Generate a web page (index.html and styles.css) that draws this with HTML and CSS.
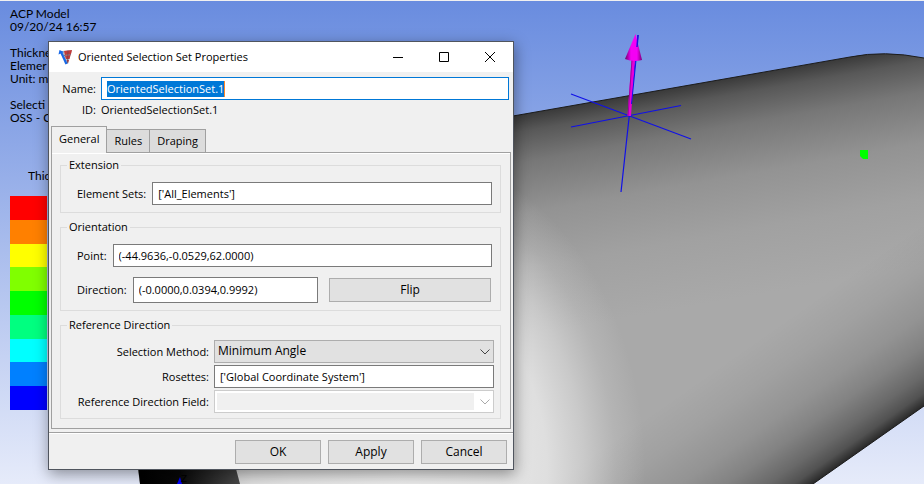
FILE: index.html
```html
<!DOCTYPE html>
<html lang="en">
<head>
<meta charset="utf-8">
<title>Oriented Selection Set Properties</title>
<link rel="stylesheet" href="styles.css">
</head>
<body>
<main class="viewport">
  <svg class="scene" viewBox="0 0 924 484" preserveAspectRatio="xMinYMin slice" aria-hidden="true">
    <defs>
      <linearGradient id="shade" gradientUnits="userSpaceOnUse" x1="600" y1="100" x2="638" y2="316">
        <stop offset="0" stop-color="#383838"/>
        <stop offset=".08" stop-color="#585858"/>
        <stop offset=".22" stop-color="#777"/>
        <stop offset=".45" stop-color="#939393"/>
        <stop offset=".7" stop-color="#a1a1a1"/>
        <stop offset="1" stop-color="#a9a9a9"/>
      </linearGradient>
      <linearGradient id="under" gradientUnits="userSpaceOnUse" x1="868" y1="445" x2="782" y2="322">
        <stop offset="0" stop-color="#000" stop-opacity=".75"/>
        <stop offset=".07" stop-color="#000" stop-opacity=".52"/>
        <stop offset=".17" stop-color="#000" stop-opacity=".38"/>
        <stop offset=".33" stop-color="#000" stop-opacity=".23"/>
        <stop offset=".5" stop-color="#000" stop-opacity=".13"/>
        <stop offset=".75" stop-color="#000" stop-opacity=".05"/>
        <stop offset="1" stop-color="#000" stop-opacity="0"/>
      </linearGradient>
      <radialGradient id="glow" gradientUnits="userSpaceOnUse" cx="0" cy="0" r="1" gradientTransform="translate(400 470) scale(245 320)">
        <stop offset="0" stop-color="#ececec"/>
        <stop offset=".45" stop-color="#e8e8e8" stop-opacity=".95"/>
        <stop offset=".6" stop-color="#e6e6e6" stop-opacity=".88"/>
        <stop offset=".75" stop-color="#e4e4e4" stop-opacity=".55"/>
        <stop offset=".88" stop-color="#e0e0e0" stop-opacity=".2"/>
        <stop offset="1" stop-color="#ddd" stop-opacity="0"/>
      </radialGradient>
      <linearGradient id="rim" gradientUnits="userSpaceOnUse" x1="138" y1="0" x2="240" y2="0">
        <stop offset="0" stop-color="#000"/>
        <stop offset=".4" stop-color="#080808"/>
        <stop offset="1" stop-color="#484848"/>
      </linearGradient>
      <linearGradient id="cone" gradientUnits="userSpaceOnUse" x1="625" y1="0" x2="642" y2="0">
        <stop offset="0" stop-color="#6a0068"/>
        <stop offset=".35" stop-color="#f400f4"/>
        <stop offset=".7" stop-color="#f400f4"/>
        <stop offset="1" stop-color="#780078"/>
      </linearGradient>
    </defs>
    <path d="M138 470C120 260 300 150 513 116L850 57Q884 50 924 58V406L813 484H140Z" fill="url(#shade)"/>
    <path d="M138 470C120 260 300 150 513 116L850 57Q884 50 924 58V406L813 484H140Z" fill="url(#under)"/>
    <path d="M150 150H700V484H150Z" fill="url(#glow)"/>
    <path d="M136 450H231L240 484H140Z" fill="url(#rim)"/>
    <path d="M513 116L850 57Q884 50 924 58M924 406L813 484" fill="none" stroke="#1c1c1c"/>
    <path d="M180 477L182 484H177Z" fill="#00f"/>
    <path d="M571 94L691 139M571 127L681 105.500M638 35L621 192" fill="none" stroke="#1010e8" stroke-width="1.2"/>
    <path d="M631.500 60L627.500 116H631L635 60Z" fill="#e800d8"/>
    <path d="M632 60L628 116" stroke="#a000a0" fill="none"/>
    <path d="M636 60L631.500 104" stroke="#1010e8" fill="none"/>
    <path d="M635.500 34L625 59Q633 62.500 642 60Z" fill="url(#cone)"/>
    <path d="M638 35L637 47" stroke="#2010e0" stroke-width="1.500" fill="none"/>
    <path d="M860 150H868V159H863L860 156Z" fill="#0f0"/>
  </svg>

  <div class="overlay">
    <p>ACP Model<br>09/20/24 16:57</p>
    <p>Thickne<br>Elemer<br>Unit: m</p>
    <p>Selecti<br>OSS - C</p>
    <p class="legend-title">Thic</p>
    <div class="legend">
      <i class="c1"></i><i class="c2"></i><i class="c3"></i><i class="c4"></i><i class="c5"></i><i class="c6"></i><i class="c7"></i><i class="c8"></i><i class="c9"></i>
    </div>
  </div>
  <span class="axis">Z</span>

  <form class="dialog" role="dialog" aria-labelledby="title">
    <header class="titlebar">
      <svg class="logo" viewBox="0 0 16 16" aria-hidden="true">
        <path d="M4 2L14 1L10 15L7 15Z" fill="#b9bdc4"/>
        <path d="M6 2L14 1L13 5L7 6ZM7 7L12.500 6L11.500 10L8 10ZM8.500 11H11L10 14Z" fill="#c23a3a"/>
        <path d="M10 1.500L9.500 14M6 6.500L13 5.500" stroke="#6e4050" stroke-width=".7"/>
        <path d="M3 3L8.500 15" stroke="#1768e8" stroke-width="2.200"/>
        <path d="M.5 5.500L1.500 1L6 3Z" fill="#1768e8"/>
      </svg>
      <h1 id="title">Oriented Selection Set Properties</h1>
      <button type="button" class="win" aria-label="Minimize"><svg viewBox="0 0 10 10"><path d="M0 5.500H10"/></svg></button>
      <button type="button" class="win" aria-label="Maximize"><svg viewBox="0 0 10 10"><path d="M.5.5H9.500V9.500H.5Z"/></svg></button>
      <button type="button" class="win" aria-label="Close"><svg viewBox="0 0 10 10"><path d="M0 0L10 10M10 0L0 10"/></svg></button>
    </header>

    <div class="identity">
      <label for="name">Name:</label>
      <div class="field name-field"><input id="name" class="name" value="OrientedSelectionSet.1"></div>
      <label for="ident">ID:</label>
      <output id="ident">OrientedSelectionSet.1</output>
    </div>

    <div class="tabs" role="tablist">
      <button type="button" role="tab" class="tab active" aria-selected="true">General</button>
      <button type="button" role="tab" class="tab">Rules</button>
      <button type="button" role="tab" class="tab">Draping</button>
    </div>

    <div class="panel" role="tabpanel">
      <fieldset>
        <legend>Extension</legend>
        <div class="row">
          <label for="sets">Element Sets:</label>
          <input id="sets" class="field" value="['All_Elements']">
        </div>
      </fieldset>
      <fieldset>
        <legend>Orientation</legend>
        <div class="row">
          <label for="point">Point:</label>
          <input id="point" class="field" value="(-44.9636,-0.0529,62.0000)">
        </div>
        <div class="row split">
          <label for="dir">Direction:</label>
          <input id="dir" class="field" value="(-0.0000,0.0394,0.9992)">
          <button type="button" class="btn flip">Flip</button>
        </div>
      </fieldset>
      <fieldset>
        <legend>Reference Direction</legend>
        <div class="grid">
          <label for="method">Selection Method:</label>
          <div class="combo">
            <select id="method" class="field"><option>Minimum Angle</option></select>
            <svg viewBox="0 0 10 6"><path d="M.5.5L5 5L9.500.5"/></svg>
          </div>
          <label for="ros">Rosettes:</label>
          <input id="ros" class="field" value="['Global Coordinate System']">
          <label for="rdf">Reference Direction Field:</label>
          <div class="combo off">
            <select id="rdf" class="field" disabled><option></option></select>
            <svg viewBox="0 0 10 6"><path d="M.5.5L5 5L9.500.5"/></svg>
          </div>
        </div>
      </fieldset>
    </div>

    <footer class="actions">
      <button type="button" class="btn">OK</button>
      <button type="button" class="btn">Apply</button>
      <button type="button" class="btn">Cancel</button>
    </footer>
  </form>
</main>
</body>
</html>
```
FILE: styles.css
```css
* { box-sizing: border-box; }
body { margin: 0; color: #000; font: 11px/16px "Open Sans", "Noto Sans", sans-serif; }
input, select, button { margin: 0; font: inherit; color: inherit; border-radius: 0; }

.viewport {
  position: relative;
  min-height: 100vh;
  overflow: hidden;
  border-top: 1px solid #f0f0f0;
  background: linear-gradient(#698cdf, #e6ebfa);
}
.scene { position: absolute; top: -1px; left: 0; width: 100%; height: 100vh; }

.overlay { position: relative; padding: 6px 0 0 10px; font: 12px/13px Lato, sans-serif; }
.overlay p { margin: 0 0 13px; }
.overlay .legend-title { margin: 45px 0 14px 18px; }
.legend { display: flex; flex-direction: column; width: 37px; height: 214px; }
.legend i { flex: 1; }
.legend .c1 { background: #f00; }
.legend .c2 { background: #ff8000; }
.legend .c3 { background: #ff0; }
.legend .c4 { background: #80ff00; }
.legend .c5 { background: #0f0; }
.legend .c6 { background: #00ff80; }
.legend .c7 { background: #0ff; }
.legend .c8 { background: #0080ff; }
.legend .c9 { background: #00f; }
.axis { position: absolute; left: 181px; top: 471px; font: 10px/12px Lato, sans-serif; }

.dialog {
  position: absolute;
  left: 48px;
  top: 40px;
  width: 466px;
  border: 1px solid #50555e;
  background: #f0f0f0;
  box-shadow: 1px 4px 14px rgba(0, 0, 0, .4);
}

.titlebar { display: flex; align-items: center; height: 30px; background: #fff; }
.logo { width: 16px; height: 16px; margin: 0 4px 0 9px; }
.titlebar h1 { flex: 1; margin: 0; font: inherit; }
.win { width: 46px; height: 30px; padding: 0; border: 0; background: none; }
.win svg { display: block; width: 10px; height: 10px; margin: auto; fill: none; stroke: #000; }

.identity {
  display: grid;
  grid-template-columns: 47px 1fr;
  column-gap: 5px;
  row-gap: 2px;
  align-items: center;
  padding: 5px 4px 8px 0;
}
.identity label { text-align: right; }

.field { width: 100%; min-width: 0; height: 23px; padding: 0 5px 1px; border: 1px solid #7a7a7a; background: #fff; outline: 0; }
.name-field { display: flex; align-items: center; padding: 0 5px; border-color: #0078d7; }
.name { field-sizing: content; height: 16px; padding: 0; border: 0; border-right: 1px solid #ff8728; background: #0078d7; color: #fff; outline: 0; }

.tabs { display: flex; align-items: flex-end; padding-left: 2px; }
.tab { height: 23px; padding: 0 7px; border: 1px solid #a0a0a0; border-width: 1px 1px 0 0; background: #dcdcdc; }
.tab.active { height: 27px; margin-bottom: -1px; padding: 0 7px 2px; border-left: 1px solid #a0a0a0; background: #f0f0f0; position: relative; }

.panel { margin: 0 2px 3px 2px; padding: 3px 9px 9px 8px; border: 1px solid #a0a0a0; box-shadow: inset 0 1px #fff; }
fieldset { margin: 0; padding: 0 8px 7px; border: 1px solid #dcdcdc; min-width: 0; }
fieldset + fieldset { margin-top: 5px; }
legend { padding: 0 2px; margin-left: -2px; line-height: 18px; }
.row { display: flex; align-items: center; gap: 6px; padding-left: 8px; margin-top: 8px; }
.row label { white-space: nowrap; }
.split { margin-top: 10px; padding-right: 1px; }
.split .field { flex: 1; height: 26px; }
.flip { margin-left: 5px; width: 162px; }

.grid { display: grid; grid-template-columns: 1fr 280px; align-items: center; gap: 2px 5px; margin: 6px -2px -2px 0; }
.grid label { text-align: right; white-space: nowrap; }
.combo { position: relative; display: flex; }
.combo select { appearance: none; padding: 0 20px 1px 3px; border-color: #adadad; background: #e1e1e1; opacity: 1; font-size: 12px; }
.combo svg { position: absolute; right: 4px; top: 9px; width: 10px; height: 6px; fill: none; stroke: #444; }
.off select { border-color: #ccc; background: linear-gradient(#f0f0f0, #f0f0f0) 2px 2px / calc(100% - 21px) calc(100% - 4px) no-repeat #fff; }
.off svg { stroke: #aaa; }

.btn { height: 24px; padding: 0 5px; border: 1px solid #adadad; background: #e1e1e1; font-size: 12px; }
.actions { display: flex; justify-content: flex-end; gap: 7px; padding: 7px 6px 5px; border-top: 1px solid #a0a0a0; box-shadow: inset 0 1px #fff; }
.actions .btn { width: 86px; }
```
